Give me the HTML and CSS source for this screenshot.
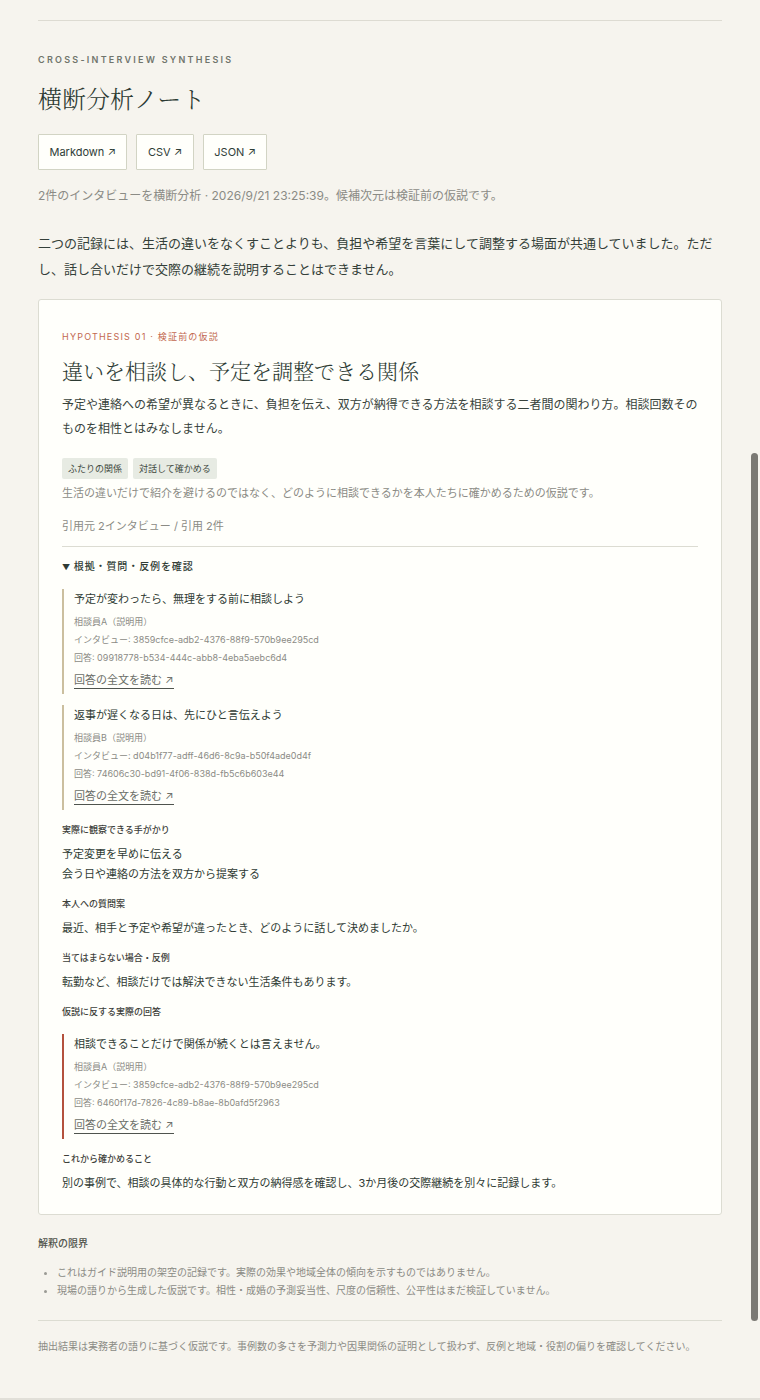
FILE: index.html
```html
<!DOCTYPE html>
<html lang="ja">
<head>
<meta charset="utf-8">
<title>横断分析ノート</title>
<link rel="stylesheet" href="styles.css">
</head>
<body>
<div class="frame">
  <main class="page">
    <header class="head">
      <p class="eyebrow">CROSS-INTERVIEW SYNTHESIS</p>
      <h1 class="title">横断分析ノート</h1>
      <div class="exports">
        <a class="btn" href="#">Markdown ↗</a>
        <a class="btn" href="#">CSV ↗</a>
        <a class="btn" href="#">JSON ↗</a>
      </div>
      <p class="meta">2件のインタビューを横断分析 · 2026/9/21 23:25:39。候補次元は検証前の仮説です。</p>
    </header>

    <p class="summary">二つの記録には、生活の違いをなくすことよりも、負担や希望を言葉にして調整する場面が共通していました。ただし、話し合いだけで交際の継続を説明することはできません。</p>

    <article class="card">
      <p class="card-label">HYPOTHESIS 01 · 検証前の仮説</p>
      <h2 class="card-title">違いを相談し、予定を調整できる関係</h2>
      <p class="card-desc">予定や連絡への希望が異なるときに、負担を伝え、双方が納得できる方法を相談する二者間の関わり方。相談回数そのものを相性とはみなしません。</p>
      <div class="tags">
        <span class="tag">ふたりの関係</span>
        <span class="tag">対話して確かめる</span>
      </div>
      <p class="tag-note">生活の違いだけで紹介を避けるのではなく、どのように相談できるかを本人たちに確かめるための仮説です。</p>
      <p class="cite">引用元 2インタビュー / 引用 2件</p>

      <details class="details" open>
        <summary><span class="caret">▼</span> 根拠・質問・反例を確認</summary>

        <div class="evidence">
          <p class="quote">予定が変わったら、無理をする前に相談しよう</p>
          <div class="source">
            <div>相談員A（説明用）</div>
            <div>インタビュー: 3859cfce-adb2-4376-88f9-570b9ee295cd</div>
            <div>回答: 09918778-b534-444c-abb8-4eba5aebc6d4</div>
          </div>
          <a class="read" href="#">回答の全文を読む ↗</a>
        </div>

        <div class="evidence">
          <p class="quote">返事が遅くなる日は、先にひと言伝えよう</p>
          <div class="source">
            <div>相談員B（説明用）</div>
            <div>インタビュー: d04b1f77-adff-46d6-8c9a-b50f4ade0d4f</div>
            <div>回答: 74606c30-bd91-4f06-838d-fb5c6b603e44</div>
          </div>
          <a class="read" href="#">回答の全文を読む ↗</a>
        </div>

        <h4 class="field-label">実際に観察できる手がかり</h4>
        <ul class="field-list">
          <li>予定変更を早めに伝える</li>
          <li>会う日や連絡の方法を双方から提案する</li>
        </ul>

        <h4 class="field-label">本人への質問案</h4>
        <p class="field-body">最近、相手と予定や希望が違ったとき、どのように話して決めましたか。</p>

        <h4 class="field-label">当てはまらない場合・反例</h4>
        <p class="field-body">転勤など、相談だけでは解決できない生活条件もあります。</p>

        <h4 class="field-label">仮説に反する実際の回答</h4>
        <div class="evidence counter">
          <p class="quote">相談できることだけで関係が続くとは言えません。</p>
          <div class="source">
            <div>相談員A（説明用）</div>
            <div>インタビュー: 3859cfce-adb2-4376-88f9-570b9ee295cd</div>
            <div>回答: 6460f17d-7826-4c89-b8ae-8b0afd5f2963</div>
          </div>
          <a class="read" href="#">回答の全文を読む ↗</a>
        </div>

        <h4 class="field-label">これから確かめること</h4>
        <p class="field-body">別の事例で、相談の具体的な行動と双方の納得感を確認し、3か月後の交際継続を別々に記録します。</p>
      </details>
    </article>

    <section class="limits">
      <h3 class="limits-title">解釈の限界</h3>
      <ul class="limits-list">
        <li>これはガイド説明用の架空の記録です。実際の効果や地域全体の傾向を示すものではありません。</li>
        <li>現場の語りから生成した仮説です。相性・成婚の予測妥当性、尺度の信頼性、公平性はまだ検証していません。</li>
      </ul>
    </section>

    <footer class="foot">抽出結果は実務者の語りに基づく仮説です。事例数の多さを予測力や因果関係の証明として扱わず、反例と地域・役割の偏りを確認してください。</footer>
  </main>
</div>
<div class="scroll-thumb"></div>
</body>
</html>
```

FILE: styles.css
```css
html, body {
  margin: 0;
  padding: 0;
  background: #f6f4ee;
}

body {
  font-family: Inter, "Noto Sans CJK JP", "Noto Sans", sans-serif;
  color: #2f3b34;
}

.frame {
  height: 1400px;
  box-sizing: border-box;
  border-bottom: 2px solid #e1dfd8;
  overflow: hidden;
}

.page {
  padding: 20px 38px 0;
}

.head {
  border-top: 1px solid #dddbd2;
}

.eyebrow {
  margin: 32px 0 0;
  font-size: 9px;
  line-height: 14px;
  letter-spacing: 2.25px;
  font-weight: 600;
  color: #70746c;
}

.title {
  margin: 15px 0 0;
  font-family: "Noto Serif CJK JP", "Noto Serif JP", "Noto Sans CJK JP", serif;
  font-weight: 300;
  font-size: 24px;
  line-height: 32px;
  color: #2c3a32;
}

.exports {
  display: flex;
  gap: 9px;
  margin-top: 20px;
}

.btn {
  display: block;
  height: 36px;
  box-sizing: border-box;
  padding: 0 10.5px;
  border: 1px solid #d2d4c4;
  border-radius: 1px;
  background: #fffffb;
  font-size: 11px;
  line-height: 34px;
  font-weight: 400;
  color: #2f4038;
  text-decoration: none;
}

.meta {
  margin: 17px 0 0;
  font-size: 12px;
  line-height: 18px;
  color: #8b8b85;
}

.summary {
  margin: 25px 0 0;
  font-size: 13px;
  line-height: 26px;
  color: #343f39;
}

.card {
  margin-top: 17px;
  background: #fffffb;
  border: 1px solid #dcdcd2;
  border-radius: 3px;
  padding: 30px 23px 21px;
}

.card-label {
  margin: 0;
  font-size: 9px;
  line-height: 14px;
  letter-spacing: 1.2px;
  color: #c2684f;
}

.card-title {
  margin: 11px 0 0;
  font-family: "Noto Serif CJK JP", "Noto Serif JP", "Noto Sans CJK JP", serif;
  font-weight: 300;
  font-size: 21px;
  line-height: 30px;
  color: #2c3a32;
}

.card-desc {
  margin: 8px 0 0;
  font-size: 12px;
  line-height: 24px;
  letter-spacing: 0;
  color: #38433c;
}

.tags {
  display: flex;
  gap: 5px;
  margin-top: 17px;
}

.tag {
  font-size: 9px;
  line-height: 21px;
  padding: 0 6px;
  background: #e7ebe3;
  color: #3f4a41;
  border-radius: 2px;
}

.tag-note {
  margin: 5px 0 0;
  font-size: 11px;
  line-height: 18px;
  color: #8b8b85;
}

.cite {
  margin: 15px 0 0;
  font-size: 11px;
  line-height: 18px;
  color: #8b8b85;
}

.details {
  margin-top: 11px;
  border-top: 1px solid #dcdcd2;
  padding-top: 11px;
}

.details summary {
  list-style: none;
  cursor: pointer;
  font-size: 10px;
  line-height: 16px;
  font-weight: 500;
  letter-spacing: 0.9px;
  color: #2f3b34;
}

.details summary::-webkit-details-marker {
  display: none;
}

.caret {
  font-size: 8px;
  letter-spacing: 0;
}

.evidence {
  margin-top: 14px;
  border-left: 2px solid #cbbf9f;
  padding: 0 0 5px 10px;
}

.evidence + .evidence {
  margin-top: 11px;
}

.evidence.counter {
  margin-top: 15px;
  border-left-color: #b4513d;
}

.quote {
  margin: 0;
  font-size: 11px;
  line-height: 20px;
  color: #2f3b34;
}

.source {
  margin-top: 4px;
  font-size: 9px;
  line-height: 18px;
  color: #8b8b85;
}

.read {
  display: block;
  width: max-content;
  margin-top: 5px;
  font-size: 11px;
  line-height: 16px;
  color: #6b6e68;
  text-decoration: none;
  border-bottom: 1px solid #4f544e;
}

.field-label {
  margin: 13px 0 0;
  font-size: 9px;
  line-height: 14px;
  font-weight: 500;
  color: #3d403a;
}

.field-list {
  list-style: none;
  margin: 7px 0 0;
  padding: 0;
  font-size: 11px;
  line-height: 20px;
  color: #2f3b34;
}

.field-body {
  margin: 7px 0 0;
  font-size: 11px;
  line-height: 20px;
  color: #2f3b34;
}

.limits {
  margin-top: 20px;
}

.limits-title {
  margin: 0;
  font-size: 10px;
  line-height: 16px;
  font-weight: 500;
  color: #4f524a;
}

.limits-list {
  margin: 12px 0 0;
  padding-left: 19px;
  font-size: 10px;
  line-height: 18px;
  color: #8b8b85;
}

.limits-list li::marker {
  color: #9a9a94;
}

.foot {
  margin-top: 21px;
  border-top: 1px solid #dcdcd2;
  padding-top: 17px;
  font-size: 10px;
  line-height: 16px;
  color: #8b8b85;
}

.scroll-thumb {
  position: fixed;
  left: 751px;
  top: 453px;
  width: 7px;
  height: 868px;
  border-radius: 4px;
  background: #7b7974;
}
```
